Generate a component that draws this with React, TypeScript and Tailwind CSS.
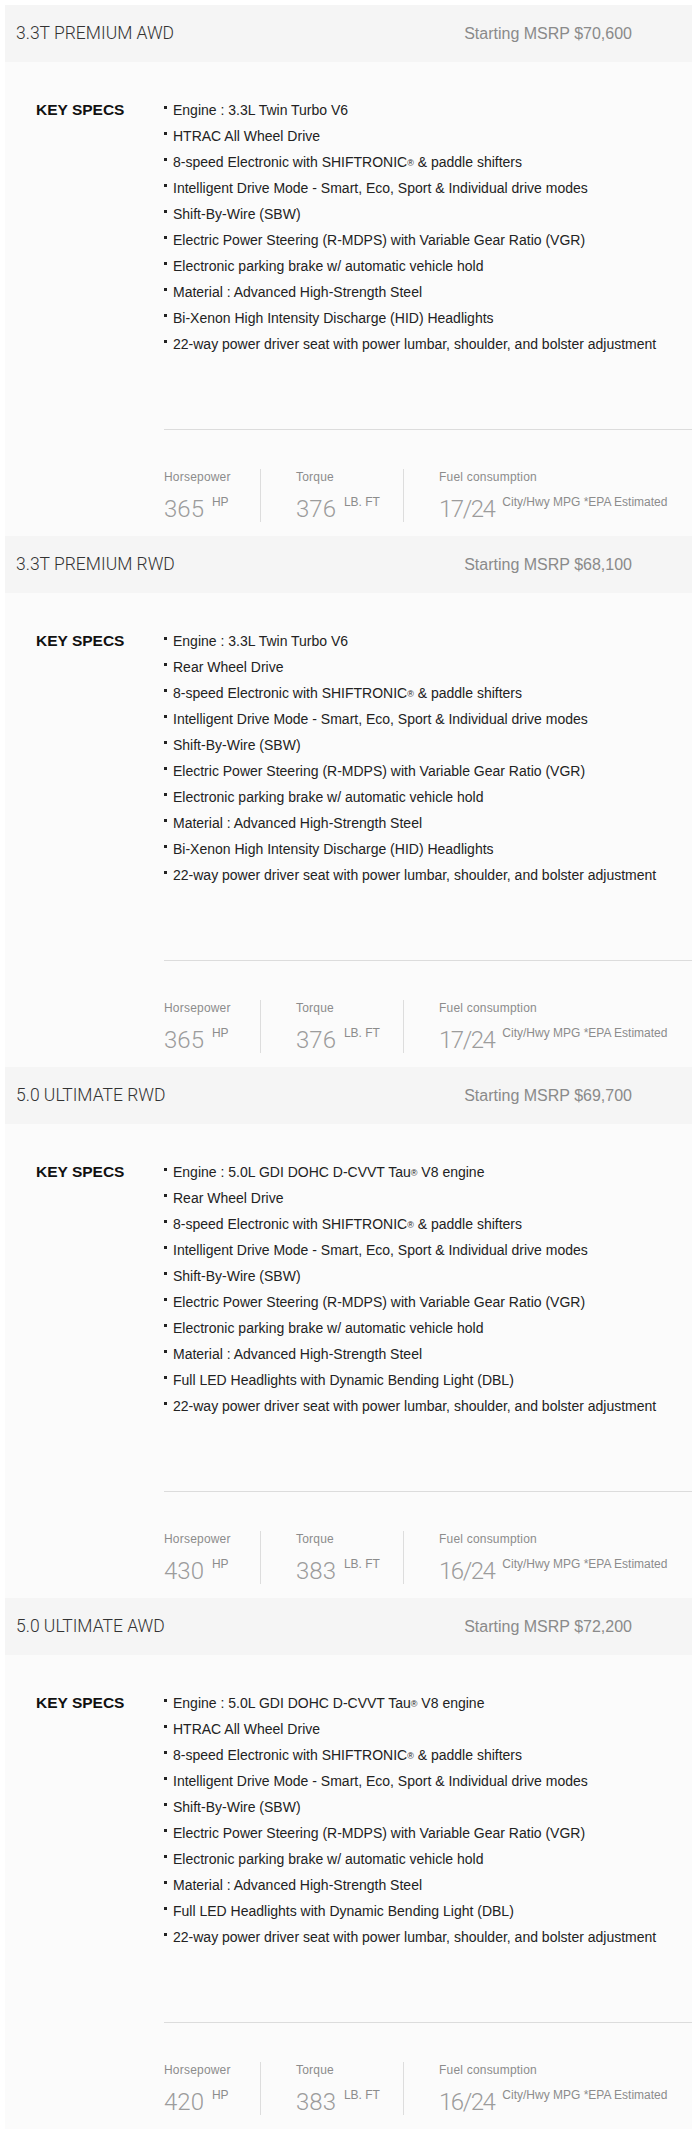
type Trim = {
  name: string
  msrp: string
  specs: string[]
  hp: string
  torque: string
  mpg: string
}

const v6 = 'Engine : 3.3L Twin Turbo V6'
const v8 = 'Engine : 5.0L GDI DOHC D-CVVT Tau® V8 engine'
const awd = 'HTRAC All Wheel Drive'
const rwd = 'Rear Wheel Drive'

const middle = [
  '8-speed Electronic with SHIFTRONIC® & paddle shifters',
  'Intelligent Drive Mode - Smart, Eco, Sport & Individual drive modes',
  'Shift-By-Wire (SBW)',
  'Electric Power Steering (R-MDPS) with Variable Gear Ratio (VGR)',
  'Electronic parking brake w/ automatic vehicle hold',
  'Material : Advanced High-Strength Steel',
]

const seat = '22-way power driver seat with power lumbar, shoulder, and bolster adjustment'
const hid = 'Bi-Xenon High Intensity Discharge (HID) Headlights'
const led = 'Full LED Headlights with Dynamic Bending Light (DBL)'

const trims: Trim[] = [
  { name: '3.3T PREMIUM AWD', msrp: '$70,600', specs: [v6, awd, ...middle, hid, seat], hp: '365', torque: '376', mpg: '17/24' },
  { name: '3.3T PREMIUM RWD', msrp: '$68,100', specs: [v6, rwd, ...middle, hid, seat], hp: '365', torque: '376', mpg: '17/24' },
  { name: '5.0 ULTIMATE RWD', msrp: '$69,700', specs: [v8, rwd, ...middle, led, seat], hp: '430', torque: '383', mpg: '16/24' },
  { name: '5.0 ULTIMATE AWD', msrp: '$72,200', specs: [v8, awd, ...middle, led, seat], hp: '420', torque: '383', mpg: '16/24' },
]

// the ® sign sits small and raised in the original
function SpecText({ text }: { text: string }) {
  const parts = text.split('®')
  return (
    <>
      {parts.map((part, i) => (
        <span key={i}>
          {part}
          {i < parts.length - 1 && <sup className="relative top-[-1px] text-[9px]">®</sup>}
        </span>
      ))}
    </>
  )
}

function Stat({
  label,
  value,
  unit,
  className,
  tight,
}: {
  label: string
  value: string
  unit: string
  className: string
  tight?: boolean
}) {
  return (
    <div className={className}>
      <div className="text-[12px] leading-[16px] tracking-[0.2px] text-[#8c8c8c]">{label}</div>
      <div className="mt-[10px] flex items-start">
        <span
          className={
            tight
              ? "font-['Roboto',sans-serif] text-[24px] leading-[28px] font-light tracking-[-1.5px] text-[#9c9c9c]"
              : "font-['Roboto',sans-serif] text-[24px] leading-[28px] font-light text-[#9c9c9c]"
          }
        >
          {value}
        </span>
        <span className="ml-[8px] text-[12px] leading-[14px] text-[#8c8c8c]">{unit}</span>
      </div>
    </div>
  )
}

function TrimSection({ trim }: { trim: Trim }) {
  return (
    <section>
      <div className="flex h-[57px] items-center justify-between bg-[#f5f5f5] pl-[11px] pr-[60px]">
        <h2 className="font-['Roboto',sans-serif] text-[17.5px] font-light text-[#333]">{trim.name}</h2>
        <div className="text-[16px] text-[#8a8a8a]">Starting MSRP {trim.msrp}</div>
      </div>
      <div className="flex h-[474px] bg-[#fbfbfb] pl-[31px] pt-[35px]">
        <div className="w-[128px] shrink-0 text-[15.5px] leading-[26px] font-bold text-[#111]">KEY SPECS</div>
        <div className="flex flex-1 flex-col">
          <ul className="text-[14px] leading-[26px] text-[#222]">
            {trim.specs.map((spec) => (
              <li key={spec} className="flex items-start">
                <span className="mr-[6px] mt-[9px] h-[3px] w-[3px] shrink-0 bg-[#222]" />
                <span>
                  <SpecText text={spec} />
                </span>
              </li>
            ))}
          </ul>
          <div className="mt-[72px] border-t border-[#dcdcdc]" />
          <div className="mt-[39px] flex h-[53px]">
            <Stat label="Horsepower" value={trim.hp} unit="HP" className="w-[97px] border-r border-[#dddddd]" />
            <Stat label="Torque" value={trim.torque} unit="LB. FT" className="w-[143px] border-r border-[#dddddd] pl-[35px]" />
            <Stat label="Fuel consumption" value={trim.mpg} unit="City/Hwy MPG *EPA Estimated" className="pl-[35px]" tight />
          </div>
        </div>
      </div>
    </section>
  )
}

export default function App() {
  return (
    <div className="min-h-screen bg-white pl-[5px] pr-[8px] pt-[5px] font-['Liberation_Sans',Arial,sans-serif]">
      {trims.map((trim) => (
        <TrimSection key={trim.name} trim={trim} />
      ))}
    </div>
  )
}
